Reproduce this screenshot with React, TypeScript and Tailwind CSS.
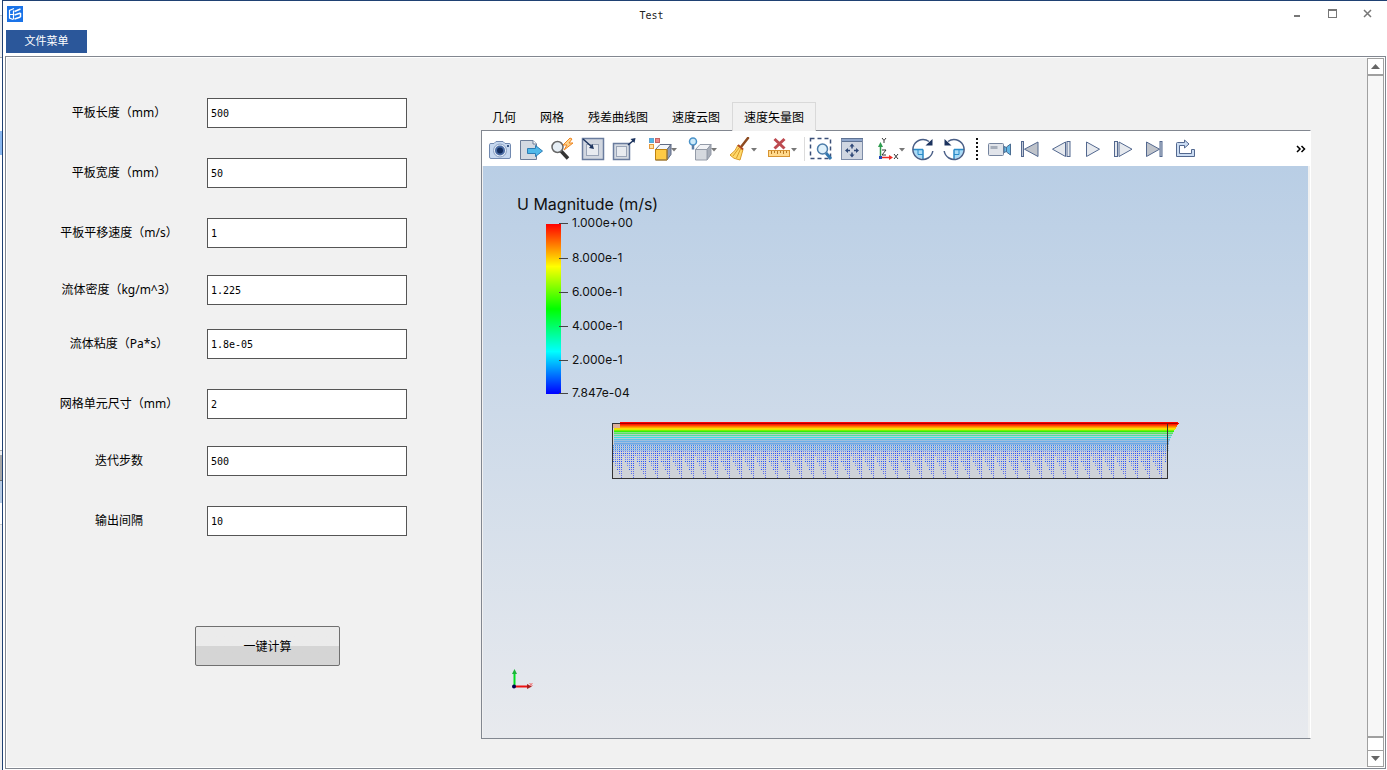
import { useState } from "react";
import type { ReactNode } from "react";

const fields = [
  { name: "length", label: "平板长度（mm）", value: "500", gap: "" },
  { name: "width", label: "平板宽度（mm）", value: "50", gap: "mt-[30px]" },
  { name: "speed", label: "平板平移速度（m/s）", value: "1", gap: "mt-[30px]" },
  { name: "density", label: "流体密度（kg/m^3）", value: "1.225", gap: "mt-[27px]" },
  { name: "viscosity", label: "流体粘度（Pa*s）", value: "1.8e-05", gap: "mt-6" },
  { name: "cell", label: "网格单元尺寸（mm）", value: "2", gap: "mt-[30px]" },
  { name: "steps", label: "迭代步数", value: "500", gap: "mt-[27px]" },
  { name: "interval", label: "输出间隔", value: "10", gap: "mt-[30px]" },
];

const tabs = ["几何", "网格", "残差曲线图", "速度云图", "速度矢量图"];

const legend = [
  { y: 57, text: "1.000e+00" },
  { y: 92, text: "8.000e-1" },
  { y: 126, text: "6.000e-1" },
  { y: 160, text: "4.000e-1" },
  { y: 194, text: "2.000e-1" },
  { y: 227, text: "7.847e-04" },
];

// dense layers near the moving plate: y, right end, colour
const layers = [
  { y: 256, end: 695, color: "#ff0000" },
  { y: 257, end: 696, color: "#e00000" },
  { y: 258, end: 695, color: "#ff1a00" },
  { y: 259, end: 694, color: "#ff4800" },
  { y: 260, end: 694, color: "#ff7b00" },
  { y: 261, end: 693, color: "#ffa800" },
  { y: 262, end: 693, color: "#ffd800" },
  { y: 263, end: 692, color: "#d8f000" },
  { y: 264, end: 691, color: "#7cf000" },
  { y: 265, end: 691, color: "#30f010" },
  { y: 266, end: 690, color: "#8adf8a" },
  { y: 267, end: 690, color: "#50e860" },
  { y: 268, end: 689, color: "#b4cfc8" },
  { y: 269, end: 689, color: "#4ce0a4" },
  { y: 270, end: 688, color: "#bccfd6" },
  { y: 271, end: 688, color: "#35dfe6" },
  { y: 272, end: 687, color: "#bccbd8" },
  { y: 273, end: 687, color: "#58c4ea" },
  { y: 274, end: 687, color: "#9dbede" },
  { y: 275, end: 686, color: "#6db0ea" },
  { y: 276, end: 686, color: "#a2bfdf" },
  { y: 277, end: 686, color: "#6aa8e6" },
  { y: 278, end: 686, color: "#90b4e0" },
];

// the dot columns repeat, each reaching down to its own depth
const reach = [296, 300, 304, 308, 312, 290];

function dots(y: number, columns: number[]) {
  let d = "";
  for (let i = 0; i < 278; i++) {
    const col = i % reach.length;
    if (columns.includes(col) && y <= reach[col]) {
      d += `M${130 + i * 2} ${y}h1v1h-1z`;
    }
  }
  return d;
}

function Icon({ children, wide }: { children: ReactNode; wide?: boolean }) {
  return (
    <svg width={wide ? 36 : 24} height="24" fill="none" className="shrink-0" aria-hidden="true">
      {children}
    </svg>
  );
}

function Cube({ front, top, side, line }: { front: string; top: string; side: string; line: string }) {
  return (
    <g stroke={line} strokeWidth="1" strokeLinejoin="round">
      <path d="M9.5 12.5L14 7.5H25L21 12.5Z" fill={top} />
      <path d="M21 12.5L25 7.5V17.5L21 23Z" fill={side} />
      <rect x="9.5" y="12.5" width="11.5" height="10.5" fill={front} />
    </g>
  );
}

const caret = <path d="M25 11h6l-3 3.5z" fill="#777" />;

const cameraIcon = (
  <Icon>
    <path d="M1.5 7.5Q1.5 6.5 3 6.5H6L8 4.5H15L17 6.5H21Q22.5 6.5 22.5 7.5V20Q22.5 21.5 21 21.5H3Q1.5 21.5 1.5 20Z" fill="#c6d8f0" stroke="#7189b0" />
    <circle cx="12" cy="13.5" r="6.5" fill="#e4edf8" stroke="#8aa0c2" />
    <circle cx="12" cy="13.5" r="5" fill="#4a6ba3" />
    <circle cx="12" cy="13.5" r="3" fill="#122c5c" />
    <rect x="19" y="8" width="2" height="2" fill="#395785" />
  </Icon>
);

const exportIcon = (
  <Icon>
    <path d="M1.5 3.5H14L17.5 7V22.5H1.5Z" fill="#d3d9e2" stroke="#6b7c98" />
    <path d="M14 3.5V7H17.5" stroke="#6b7c98" fill="#fff" />
    <path d="M8.5 11.5H16.5V8.5L23.5 14L16.5 19.5V16.5H8.5Z" fill="#4fb9ea" stroke="#2d7db5" />
  </Icon>
);

const findIcon = (
  <Icon>
    <path d="M11 14L18 21.5" stroke="#333" strokeWidth="3.5" />
    <circle cx="7.5" cy="10" r="5.5" fill="#e6eef5" stroke="#666" strokeWidth="1.5" />
    <path d="M20 1L13 8H17L14 13L23 6H19L22 2Z" fill="#ffd28a" stroke="#ee8520" />
  </Icon>
);

const boxInIcon = (
  <Icon>
    <rect x="1.5" y="1.5" width="21" height="21" fill="#d2d7e0" stroke="#6a7c9e" strokeWidth="1.5" />
    <rect x="5.5" y="7.5" width="12" height="11" fill="#e8ebf0" stroke="#9aa5b8" />
    <path d="M2 2L11 10" stroke="#1c335e" strokeWidth="1.5" />
    <path d="M13 12L8 11L11.5 7Z" fill="#1c335e" />
  </Icon>
);

const boxOutIcon = (
  <Icon>
    <rect x="1.5" y="6.5" width="16" height="16" fill="#d5dae2" stroke="#6a7c9e" strokeWidth="1.5" />
    <rect x="4.5" y="9.5" width="10" height="10" fill="#e8ebf0" stroke="#9aa5b8" />
    <path d="M16 8L22 3" stroke="#1c335e" strokeWidth="1.5" />
    <path d="M23.5 1L22.5 6L18.5 2Z" fill="#1c335e" />
  </Icon>
);

const extractIcon = (
  <Icon wide>
    <rect x="3.5" y="1.5" width="4" height="4" fill="#4db6e8" stroke="#5fa5d3" />
    <rect x="9.5" y="1.5" width="4" height="4" fill="#ef8a8a" stroke="#c46464" />
    <rect x="3.5" y="7.5" width="4" height="4" fill="#ffe0a5" stroke="#e59a3c" />
    <Cube front="#ffcb45" top="#f4f6fa" side="#8d9ab5" line="#5f6b84" />
    <path d="M9.5 12.5H21V23H9.5Z" stroke="#bf8210" />
    {caret}
  </Icon>
);

const lampIcon = (
  <Icon wide>
    <Cube front="#d5d9df" top="#f2f3f6" side="#a7adb8" line="#949ba8" />
    <circle cx="7" cy="4.5" r="3.5" fill="#cdeafa" stroke="#4a92c8" strokeWidth="1.5" />
    <path d="M7 8V12.5" stroke="#5c7da5" strokeWidth="2.5" />
    {caret}
  </Icon>
);

const broomIcon = (
  <Icon wide>
    <path d="M22 1L15 10" stroke="#8d4b20" strokeWidth="2.5" strokeLinecap="round" />
    <path d="M12 8L17 12.5L14 23Q7 22 4 18Q10 14 12 8Z" fill="#ffd96a" stroke="#d99a28" />
    <path d="M13 11L7 19M14.5 12L10.5 21" stroke="#d99a28" />
    <path d="M12 8L17 12.5" stroke="#b04a20" strokeWidth="2" />
    {caret}
  </Icon>
);

const rulerIcon = (
  <Icon wide>
    <rect x="2.5" y="13.5" width="21" height="6" fill="#ffd98c" stroke="#d79431" />
    <path d="M5.5 14v3M8.5 14v2M11.5 14v3M14.5 14v2M17.5 14v3M20.5 14v2" stroke="#b97a22" />
    <path d="M8.5 2L18.5 11.5M18.5 2L8.5 11.5" stroke="#bd4a50" strokeWidth="3" />
    {caret}
  </Icon>
);

const zoomBoxIcon = (
  <Icon>
    <rect x="1.5" y="1.5" width="20" height="20" stroke="#3b4f78" strokeWidth="1.5" strokeDasharray="4 3" />
    <path d="M17 16L22 22" stroke="#3278b0" strokeWidth="3" />
    <circle cx="13.5" cy="12" r="5" fill="#dff1fb" stroke="#4b7ca9" strokeWidth="1.5" />
  </Icon>
);

const fitIcon = (
  <Icon>
    <rect x="1.5" y="1.5" width="21" height="21" fill="#d0d6e1" stroke="#7d8ca8" />
    <path d="M2 3H22" stroke="#8fa6cb" strokeWidth="2" />
    <path d="M1 1.5H23M2 4.5H22" stroke="#5f7394" />
    <path d="M12 9V11.5M12 15.5V18M7 13.5H10M14 13.5H17" stroke="#2f4877" strokeWidth="1.5" />
    <path d="M12 6.5L14.5 9.5H9.5ZM12 20.5L14.5 17.5H9.5ZM5 13.5L8 11V16ZM19 13.5L16 11V16Z" fill="#2f4877" />
  </Icon>
);

const axesIcon = (
  <Icon wide>
    <path d="M11.5 20V8" stroke="#2d9c4e" strokeWidth="1.5" />
    <path d="M11.5 5L14 10H9Z" fill="#2d9c4e" />
    <path d="M12 20.5H22" stroke="#ee2b24" strokeWidth="1.5" />
    <path d="M24 20.5L20 18V23Z" fill="#ee2b24" />
    <rect x="10" y="19" width="3" height="3" fill="#2447b8" />
    <path d="M13 1L15 3.5L17 1M15 3.5V6M13 13H17L13 18H17M25 17L29 22M29 17L25 22" stroke="#333" />
    <path d="M30 11h6l-3 3.5z" fill="#777" />
  </Icon>
);

const turn = (
  <>
    <path d="M12 12.5H2.5A10 9.5 0 0 0 12 22Z" fill="#a9dbf7" />
    <path d="M12 12.5V22M2 12.5H12" stroke="#2b8bc8" strokeWidth="1.5" />
    <path d="M7 12.5V17.5H12" stroke="#2b8bc8" />
    <path d="M18 4.5A10 10 0 1 0 21.8 14" stroke="#4a5f87" strokeWidth="1.5" />
    <path d="M21.5 2V8.5H14.5Z" fill="#1c335e" />
  </>
);
const turnRightIcon = <Icon>{turn}</Icon>;
const turnLeftIcon = (
  <Icon>
    <g transform="matrix(-1 0 0 1 24 0)">{turn}</g>
  </Icon>
);

const videoIcon = (
  <Icon>
    <rect x="0.5" y="6.5" width="15" height="12" rx="1" fill="#e1e4ea" stroke="#75849e" />
    <rect x="2.5" y="9" width="7" height="3" fill="#a5adba" />
    <path d="M16 9.5L18.5 10.5V14.5L16 15.5ZM18.5 10L22.5 7V18L18.5 15Z" fill="#64b6e4" stroke="#4a6d92" />
  </Icon>
);

const firstIcon = (
  <Icon>
    <rect x="2.5" y="4.5" width="2" height="15" fill="#c5ccd8" stroke="#53688f" />
    <path d="M19 5V19.5L5.5 12.2Z" fill="#bfc3ca" stroke="#53688f" />
  </Icon>
);
const backIcon = (
  <Icon>
    <path d="M15.5 5V19.5L2.5 12.2Z" fill="#e6e9ee" stroke="#53688f" />
    <rect x="17" y="4.5" width="3" height="15" fill="#e6e9ee" stroke="#53688f" />
  </Icon>
);
const playIcon = (
  <Icon>
    <path d="M5.5 5V19.5L18.5 12.2Z" fill="#e6e9ee" stroke="#53688f" />
  </Icon>
);
const forwardIcon = (
  <Icon>
    <rect x="2.5" y="4.5" width="3" height="15" fill="#e6e9ee" stroke="#53688f" />
    <path d="M7 5V19.5L20 12.2Z" fill="#e6e9ee" stroke="#53688f" />
  </Icon>
);
const lastIcon = (
  <Icon>
    <path d="M3.5 5V19.5L16.5 12.2Z" fill="#bfc3ca" stroke="#53688f" />
    <rect x="17" y="4.5" width="2" height="15" fill="#c5ccd8" stroke="#53688f" />
  </Icon>
);
const loopIcon = (
  <Icon>
    <path d="M2.5 19.5V6.5Q2.5 5.5 3.5 5.5H10.5V3L15 7L10.5 11V8.5H5.5V16.5H17.5V12.5H20.5V19.5Z" fill="#cbdcf2" stroke="#53688f" />
  </Icon>
);

function Tool({ label, children }: { label: string; children: ReactNode }) {
  return (
    <button type="button" aria-label={label} className="flex h-6 w-[31px] shrink-0 justify-center">
      {children}
    </button>
  );
}

function MenuTool({ label, children }: { label: string; children: ReactNode }) {
  return (
    <button type="button" aria-label={label} className="flex h-6 w-10 shrink-0 justify-center">
      {children}
    </button>
  );
}

function Toolbar() {
  return (
    <div className="flex h-[35px] shrink-0 items-start bg-white pt-1.5 pl-0.5">
      <Tool label="截图">{cameraIcon}</Tool>
      <Tool label="导出">{exportIcon}</Tool>
      <Tool label="查找">{findIcon}</Tool>
      <Tool label="缩小到框">{boxInIcon}</Tool>
      <Tool label="放大到框">{boxOutIcon}</Tool>
      <div className="ml-[5px] flex">
        <MenuTool label="提取">{extractIcon}</MenuTool>
        <MenuTool label="光照">{lampIcon}</MenuTool>
        <MenuTool label="清除">{broomIcon}</MenuTool>
        <MenuTool label="删除标尺">{rulerIcon}</MenuTool>
      </div>
      <div className="h-6 w-px bg-[#dcdcdc]" />
      <Tool label="框选缩放">{zoomBoxIcon}</Tool>
      <Tool label="适应窗口">{fitIcon}</Tool>
      <MenuTool label="坐标轴">{axesIcon}</MenuTool>
      <Tool label="顺时针旋转">{turnRightIcon}</Tool>
      <Tool label="逆时针旋转">{turnLeftIcon}</Tool>
      <svg width="15" height="24" className="shrink-0" aria-hidden="true">
        <path d="M8 1V24" stroke="#111" strokeWidth="2" strokeDasharray="2 2" />
      </svg>
      <Tool label="录像">{videoIcon}</Tool>
      <Tool label="第一帧">{firstIcon}</Tool>
      <Tool label="上一帧">{backIcon}</Tool>
      <Tool label="播放">{playIcon}</Tool>
      <Tool label="下一帧">{forwardIcon}</Tool>
      <Tool label="最后一帧">{lastIcon}</Tool>
      <Tool label="循环">{loopIcon}</Tool>
      <button type="button" aria-label="更多" className="mr-[3px] ml-auto flex h-6 w-3 items-center justify-center">
        <svg width="10" height="8" fill="none" stroke="#000" strokeWidth="1.5">
          <path d="M1 1L4 4L1 7M5.5 1L8.5 4L5.5 7" />
        </svg>
      </button>
    </div>
  );
}

function VectorPlot() {
  const rows = [];
  for (let y = 279; y < 312; y += 2) rows.push(y);

  return (
    <svg className="block h-full w-full" role="img" aria-label="U Magnitude (m/s)">
      <defs>
        <linearGradient id="rainbow" x1="0" y1="0" x2="0" y2="1">
          <stop offset="0" stopColor="#ff0000" />
          <stop offset="0.25" stopColor="#ffff00" />
          <stop offset="0.5" stopColor="#00ff00" />
          <stop offset="0.75" stopColor="#00ffff" />
          <stop offset="1" stopColor="#0000ff" />
        </linearGradient>
      </defs>

      <g className="font-['Inter',sans-serif]" fill="#111">
        <text x="34" y="44" fontSize="16">U Magnitude (m/s)</text>
        {legend.map((item) => (
          <text key={item.text} x="89" y={item.y + 4} fontSize="12">
            {item.text}
          </text>
        ))}
      </g>
      <rect x="63" y="58" width="15" height="170" fill="url(#rainbow)" />
      {legend.map((item) => (
        <path key={item.y} d={`M76 ${item.y + 0.5}h9`} stroke="#444" />
      ))}

      <rect x="129" y="257" width="556" height="55" fill="#cfd3d8" />
      <rect x="130" y="257" width="7" height="5" fill="#dcae98" />
      <g shapeRendering="crispEdges">
        {layers.map((l) => (
          <path key={l.y} d={`M${l.y < 262 ? 137 : 131} ${l.y + 0.5}H${l.end}`} stroke={l.color} />
        ))}
        <path d="M130 280.5H686M130 282.5H686M130 284.5H686" stroke="#a3bee0" />
        {rows.map((y) => (
          <g key={y}>
            <path
              d={dots(y, [0, 1, 2, 5])}
              fill={y < 285 ? "#3d8cf5" : y % 8 === 7 ? "#1f55ff" : "#6a86f5"}
            />
            <path d={dots(y, [3, 4])} fill={y < 285 ? "#2a80fa" : y < 303 ? "#2b50ff" : "#5a6cf0"} />
          </g>
        ))}
        <rect x="129.5" y="257.5" width="555" height="55" fill="none" stroke="#333" />
        <path d="M137 257.5H694" stroke="#a80000" />
      </g>

      <path d="M31.5 520V507" stroke="#00dd20" strokeWidth="2" />
      <path d="M31.5 503L34 508H29Z" fill="#1cb33a" />
      <path d="M32 520.5H46" stroke="#ee1111" strokeWidth="2" />
      <path d="M49 520.5L44 518V523Z" fill="#a82020" />
      <path d="M46.5 517L49.5 520M49.5 517L46.5 520" stroke="#f26666" />
      <circle cx="31" cy="520.5" r="2" fill="#000050" />
    </svg>
  );
}

function Viewer() {
  const [active, setActive] = useState(4);

  return (
    <section className="mt-11 mr-14 mb-7 ml-[74px] flex min-w-0 flex-1 flex-col">
      <div role="tablist" className="-ml-px flex h-7">
        {tabs.map((tab, i) => (
          <button
            key={tab}
            type="button"
            role="tab"
            aria-selected={i === active}
            onClick={() => setActive(i)}
            className={
              i === active
                ? "z-10 -mb-px border border-b-0 border-[#d9d9d9] bg-[#f1f1f1] px-[11px] pt-0.5 text-xs"
                : "px-3 pt-1 text-xs"
            }
          >
            {tab}
          </button>
        ))}
      </div>
      <div className="flex flex-1 flex-col border border-[#828790] border-r-white bg-[#f1f1f1]">
        <Toolbar />
        <div className="mr-0.5 ml-px flex-1 bg-linear-to-b from-[#b9cee5] to-[#e8eaee]">
          <VectorPlot />
        </div>
      </div>
    </section>
  );
}

function ParamForm() {
  const [form, setForm] = useState<Record<string, string>>(
    Object.fromEntries(fields.map((f) => [f.name, f.value]))
  );

  return (
    <form onSubmit={(e) => e.preventDefault()} className="w-[400px] shrink-0 pt-10">
      {fields.map((f) => (
        <div key={f.name} className={`flex items-center pl-6 ${f.gap}`}>
          <label htmlFor={f.name} className="w-44 text-center text-xs">
            {f.label}
          </label>
          <input
            id={f.name}
            name={f.name}
            value={form[f.name]}
            onChange={(e) => setForm({ ...form, [f.name]: e.target.value })}
            className="h-[30px] w-[200px] border border-[#555] bg-white px-[3px] font-['DejaVu_Sans_Mono',monospace] text-[10px] outline-none"
          />
        </div>
      ))}
      <button
        type="submit"
        className="mt-[90px] ml-[188px] h-10 w-[145px] rounded-xs border border-[#707070] bg-linear-to-b from-[#ebebeb] from-50% to-[#d5d5d5] to-50% pt-0.5 text-xs"
      >
        一键计算
      </button>
    </form>
  );
}

function Scrollbar() {
  return (
    <div className="flex w-[17px] shrink-0 flex-col bg-[#a0a0a0] p-px">
      <button type="button" aria-label="向上滚动" className="flex h-[15px] items-center justify-center bg-white">
        <svg width="9" height="5">
          <path d="M0 5L4.5 0L9 5Z" fill="#666" />
        </svg>
      </button>
      <div className="mt-0.5 flex-1 bg-[#f7f7f7]" />
      <div className="mt-0.5 h-3 bg-white" />
      <button type="button" aria-label="向下滚动" className="mt-px flex h-[15px] items-center justify-center bg-white">
        <svg width="9" height="5">
          <path d="M0 0L4.5 5L9 0Z" fill="#666" />
        </svg>
      </button>
    </div>
  );
}

function TitleBar() {
  return (
    <header className="flex h-[25px] items-center pr-0.5 pl-1">
      <svg width="16" height="16" fill="none" stroke="#fff" aria-hidden="true">
        <rect width="16" height="16" fill="#1a73e8" stroke="none" />
        <path d="M7 2.5L2.5 4.5V12L6 13.5M2.5 8.5H6M6.5 4.5V13.5" strokeWidth="1.2" />
        <path d="M7.5 5.5L13.5 3M7.5 9L13.5 7M7.5 13L13.5 11M13.5 7V11" strokeWidth="1.5" />
      </svg>
      <h1 className="flex-1 pt-1 text-center font-['DejaVu_Sans_Mono',monospace] text-[10px] text-[#222]">Test</h1>
      <button type="button" aria-label="最小化" className="flex h-6 w-[35px] items-center justify-center">
        <svg width="9" height="9">
          <rect x="1" y="6" width="6" height="2" fill="#777" />
        </svg>
      </button>
      <button type="button" aria-label="最大化" className="flex h-6 w-[35px] items-center justify-center">
        <svg width="9" height="9">
          <rect x="0.5" y="0.5" width="8" height="8" fill="none" stroke="#777" />
          <rect width="9" height="2" fill="#777" />
        </svg>
      </button>
      <button type="button" aria-label="关闭" className="flex h-6 w-[35px] items-center justify-center">
        <svg width="9" height="9">
          <path d="M1 1L8 8M8 1L1 8" stroke="#777" strokeWidth="1.5" />
        </svg>
      </button>
    </header>
  );
}

// sliver of the window that lies behind this one
function BackWindow() {
  return (
    <div className="flex w-0.5 shrink-0 flex-col bg-[#f0f0f0]">
      <div className="h-4 border-b border-[#ccc] bg-white" />
      <div className="h-[42px] border-b border-[#aaa]" />
      <div className="h-[73px] bg-white" />
      <div className="h-6 bg-[#8ab8f0]" />
      <div className="h-[295px] bg-white" />
      <div className="h-[5px] border-t border-[#aaa]" />
      <div className="h-[26px] border-b border-[#666] bg-[#a8a8a8]" />
      <div className="h-[22px] bg-[#b8cce4]" />
      <div className="h-[22px] border-b border-[#ccc] bg-white" />
    </div>
  );
}

function App() {
  return (
    <div className="flex min-h-screen bg-white font-['Noto_Sans','Noto_Sans_CJK_SC',sans-serif] text-black">
      <BackWindow />
      <div className="flex min-w-0 flex-1 flex-col border-t border-l border-[#1f4173]">
        <TitleBar />
        <nav className="mt-1 mb-[3px] pl-[3px]">
          <button type="button" className="block h-[23px] w-[81px] bg-[#2b579a] text-[11px] text-white">
            文件菜单
          </button>
        </nav>
        <main className="mr-px mb-px ml-0.5 flex flex-1 border border-[#828790] bg-white p-px">
          <div className="flex min-w-0 flex-1 bg-[#f1f1f1]">
            <ParamForm />
            <Viewer />
          </div>
          <Scrollbar />
        </main>
      </div>
    </div>
  );
}

export default App;
